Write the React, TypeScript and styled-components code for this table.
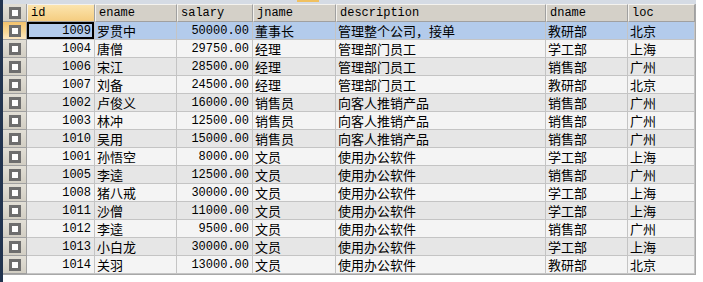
import React from 'react';
import styled, { createGlobalStyle, css } from 'styled-components';

const GlobalStyle = createGlobalStyle`
  html, body {
    margin: 0;
    padding: 0;
    background: #ffffff;
  }
`;

type Tone = 'sel' | 'light' | 'dark';

interface Emp {
  id: number;
  ename: string;
  salary: string;
  jname: string;
  description: string;
  dname: string;
  loc: string;
}

const rows: Emp[] = [
  { id: 1009, ename: '罗贯中', salary: '50000.00', jname: '董事长', description: '管理整个公司，接单', dname: '教研部', loc: '北京' },
  { id: 1004, ename: '唐僧', salary: '29750.00', jname: '经理', description: '管理部门员工', dname: '学工部', loc: '上海' },
  { id: 1006, ename: '宋江', salary: '28500.00', jname: '经理', description: '管理部门员工', dname: '销售部', loc: '广州' },
  { id: 1007, ename: '刘备', salary: '24500.00', jname: '经理', description: '管理部门员工', dname: '教研部', loc: '北京' },
  { id: 1002, ename: '卢俊义', salary: '16000.00', jname: '销售员', description: '向客人推销产品', dname: '销售部', loc: '广州' },
  { id: 1003, ename: '林冲', salary: '12500.00', jname: '销售员', description: '向客人推销产品', dname: '销售部', loc: '广州' },
  { id: 1010, ename: '吴用', salary: '15000.00', jname: '销售员', description: '向客人推销产品', dname: '销售部', loc: '广州' },
  { id: 1001, ename: '孙悟空', salary: '8000.00', jname: '文员', description: '使用办公软件', dname: '学工部', loc: '上海' },
  { id: 1005, ename: '李逵', salary: '12500.00', jname: '文员', description: '使用办公软件', dname: '销售部', loc: '广州' },
  { id: 1008, ename: '猪八戒', salary: '30000.00', jname: '文员', description: '使用办公软件', dname: '学工部', loc: '上海' },
  { id: 1011, ename: '沙僧', salary: '11000.00', jname: '文员', description: '使用办公软件', dname: '学工部', loc: '上海' },
  { id: 1012, ename: '李逵', salary: '9500.00', jname: '文员', description: '使用办公软件', dname: '销售部', loc: '广州' },
  { id: 1013, ename: '小白龙', salary: '30000.00', jname: '文员', description: '使用办公软件', dname: '学工部', loc: '上海' },
  { id: 1014, ename: '关羽', salary: '13000.00', jname: '文员', description: '使用办公软件', dname: '教研部', loc: '北京' },
];

const columns = ['id', 'ename', 'salary', 'jname', 'description', 'dname', 'loc'];

const Window = styled.div`
  display: flex;
  width: 703px;
  height: 282px;
  background: #ffffff;
  overflow: hidden;
`;

const SideStrip = styled.div`
  width: 3px;
  flex: none;
  background: #22344f;
`;

const Main = styled.div`
  display: flex;
  flex-direction: column;
  width: 693px;
`;

const TopStrip = styled.div`
  height: 4px;
  background: #d5dbe4;
  display: flex;
  padding-left: 294px;
`;

const TabMark = styled.div`
  width: 22px;
  height: 2px;
  background: #f0c060;
`;

const Grid = styled.div`
  display: grid;
  grid-template-columns: 24px 68px 82px 76px 83px 210px 82px 67px;
  grid-auto-rows: 18px;
  border-right: 1px solid #a8a8a8;
  border-bottom: 1px solid #a8a8a8;
  font-family: 'Liberation Mono', 'Noto Sans CJK SC', monospace;
  font-size: 12px;
  color: #000000;
`;

const RowHead = styled.div<{ $selected?: boolean }>`
  display: flex;
  align-items: center;
  justify-content: center;
  box-sizing: border-box;
  border-right: 1px solid #a0a0a0;
  border-bottom: 1px solid #a0a0a0;
  background: ${(p) =>
    p.$selected
      ? 'linear-gradient(#f2c26c, #f8d898 60%, #fde8c2)'
      : 'linear-gradient(#e2dfd6, #d2cec3)'};
`;

const Box = styled.div`
  width: 12px;
  height: 12px;
  box-sizing: border-box;
  border: 3px solid #6e6e6e;
  background: #ffffff;
`;

const HeadCell = styled.div<{ $active?: boolean }>`
  display: flex;
  align-items: center;
  padding-left: 3px;
  box-sizing: border-box;
  border-top: 1px solid #f4f2ee;
  border-left: 1px solid #f4f2ee;
  border-right: 1px solid #a0a0a0;
  border-bottom: 1px solid #a0a0a0;
  background: ${(p) =>
    p.$active ? 'linear-gradient(#fbe4ae, #f5cd80)' : '#d4d0c8'};
  white-space: nowrap;
`;

const toneColor: Record<Tone, string> = {
  sel: '#b3cbeb',
  light: '#f4f4f4',
  dark: '#e6e6e6',
};

const Cell = styled.div<{ $tone: Tone; $right?: boolean; $cjk?: boolean; $focus?: boolean }>`
  display: flex;
  align-items: center;
  justify-content: ${(p) => (p.$right ? 'flex-end' : 'flex-start')};
  padding: ${(p) => (p.$right ? '0 3px 0 0' : '0 0 0 2px')};
  box-sizing: border-box;
  border-right: 1px solid #c4c4c4;
  border-bottom: 1px solid #c4c4c4;
  background: ${(p) => toneColor[p.$tone]};
  white-space: nowrap;
  overflow: hidden;
  ${(p) =>
    p.$cjk &&
    css`
      font-size: 13px;
    `}
  ${(p) =>
    p.$focus &&
    css`
      box-shadow: inset 0 0 0 2px #000000;
    `}
`;

const App = () => {
  return (
    <>
      <GlobalStyle />
      <Window>
        <SideStrip />
        <Main>
          <TopStrip>
            <TabMark />
          </TopStrip>
          <Grid>
            <RowHead>
              <Box />
            </RowHead>
            {columns.map((c) => (
              <HeadCell key={c} $active={c === 'id'}>
                {c}
              </HeadCell>
            ))}
            {rows.map((r, i) => {
              const tone: Tone = i === 0 ? 'sel' : i % 2 === 1 ? 'light' : 'dark';
              return (
                <React.Fragment key={r.id}>
                  <RowHead $selected={i === 0}>
                    <Box />
                  </RowHead>
                  <Cell $tone={tone} $right $focus={i === 0}>
                    {r.id}
                  </Cell>
                  <Cell $tone={tone} $cjk>
                    {r.ename}
                  </Cell>
                  <Cell $tone={tone} $right>
                    {r.salary}
                  </Cell>
                  <Cell $tone={tone} $cjk>
                    {r.jname}
                  </Cell>
                  <Cell $tone={tone} $cjk>
                    {r.description}
                  </Cell>
                  <Cell $tone={tone} $cjk>
                    {r.dname}
                  </Cell>
                  <Cell $tone={tone} $cjk>
                    {r.loc}
                  </Cell>
                </React.Fragment>
              );
            })}
          </Grid>
        </Main>
      </Window>
    </>
  );
};

export default App;
